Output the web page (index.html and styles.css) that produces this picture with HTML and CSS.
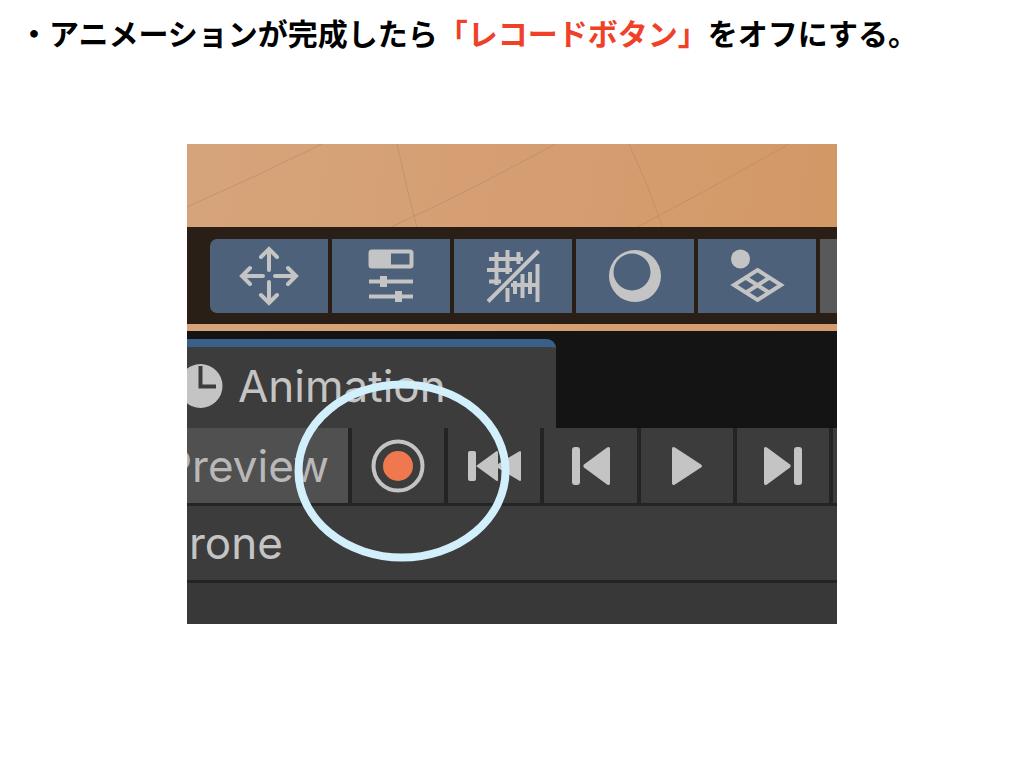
FILE: index.html
```html
<!DOCTYPE html>
<html lang="ja">
<head>
<meta charset="utf-8">
<title>レコードボタン</title>
<link rel="stylesheet" href="styles.css">
</head>
<body>
<main class="slide">
  <h1 class="title">・アニメーションが完成したら<em class="accent">「レコードボタン」</em>をオフにする。</h1>
  <section class="editor" aria-label="Animation">
    <svg class="scene" viewBox="0 0 650 83" preserveAspectRatio="none" aria-hidden="true">
      <path d="M0 63Q70 32 135 0M202 84Q285 46 368 0M449 84Q525 44 602 0M210 0Q219 42 230 84M442 0Q461 40 476 84"/>
    </svg>
    <div class="toolbar">
      <button class="tool" type="button" aria-label="Move">
        <svg class="icon" viewBox="0 0 60 60"><path class="line round" d="M30 24V4M22 11L30 3L38 11M30 36V56M22 49L30 57L38 49M24 30H4M11 22L3 30L11 38M36 30H56M49 22L57 30L49 38"/></svg>
      </button>
      <button class="tool" type="button" aria-label="Options">
        <svg class="icon" viewBox="0 0 60 60"><rect class="line" x="9.5" y="5.500" width="41" height="15" rx="1.500"/><path class="fill" d="M8 6Q8 4 10 4H30V22H10Q8 22 8 20Z"/><path class="line" d="M8 35.500H52M8 50.500H52"/><path class="fill" d="M19 30H26V41H19ZM34 45H41V56H34Z"/></svg>
      </button>
      <button class="tool" type="button" aria-label="Grid">
        <svg class="icon" viewBox="0 0 60 60"><path class="line" d="M5 55.500L55.500 5M13.500 6V39M24.500 4V28M35.500 6V18M6 13H40M4 24H29M6 35.500H18M24.500 42V56M32 35V48M39.500 28V52M47 26V48M54.500 18V56M28 39H54"/></svg>
      </button>
      <button class="tool" type="button" aria-label="Shading">
        <svg class="icon" viewBox="0 0 60 60"><path class="fill" fill-rule="evenodd" d="M30 4A26 26 0 1 1 30 56A26 26 0 1 1 30 4ZM27 7.500A18.500 18.500 0 1 0 27 44.500A18.500 18.500 0 1 0 27 7.500Z"/></svg>
      </button>
      <button class="tool" type="button" aria-label="Snap">
        <svg class="icon" viewBox="0 0 60 60"><circle class="fill" cx="13.500" cy="13" r="9.500"/><path class="line" d="M30.500 24L54 39L30.500 54L7 39ZM18.500 31.500L42 46.500M42.500 31.500L19 46.500"/></svg>
      </button>
      <span class="tool-next"></span>
    </div>
    <div class="strip"></div>
    <div class="tabs">
      <div class="tab">
        <svg class="clock" viewBox="9 0 36 44" aria-hidden="true"><circle class="fill" cx="22.500" cy="22" r="22"/><path class="hands" d="M22.500 2V22.500H38"/></svg>
        <span>Animation</span>
      </div>
    </div>
    <div class="controls">
      <button class="preview" type="button">Preview</button>
      <button class="control" type="button" aria-label="Record">
        <svg class="icon" viewBox="0 0 60 60"><circle class="line" cx="30" cy="30" r="24.500"/><circle class="record" cx="30" cy="30" r="15"/></svg>
      </button>
      <button class="control" type="button" aria-label="First frame">
        <svg class="icon" viewBox="0 0 60 60"><rect class="fill" x="4" y="15" width="8" height="30" rx="2"/><path class="fill" d="M12 30L32 15.500Q34 14 34 16.500V28L55 15.500Q57 14 57 16.500V43.500Q57 46 55 44.500L34 32V43.500Q34 46 32 44.500Z"/></svg>
      </button>
      <button class="control" type="button" aria-label="Previous frame">
        <svg class="icon" viewBox="0 0 60 60"><rect class="fill" x="11" y="11" width="8" height="38" rx="3"/><path class="fill" d="M23 28.500L46 11.500Q49 10 49 13V47Q49 50 46 48.500L23 31.500Q21.500 30 23 28.500Z"/></svg>
      </button>
      <button class="control" type="button" aria-label="Play">
        <svg class="icon" viewBox="0 0 60 60"><path class="fill" d="M15 13Q15 10 18 11.500L44 28.500Q46 30 44 31.500L18 48.500Q15 50 15 47Z"/></svg>
      </button>
      <button class="control" type="button" aria-label="Next frame">
        <svg class="icon" viewBox="0 0 60 60"><rect class="fill" x="41" y="11" width="8" height="38" rx="3"/><path class="fill" d="M37 28.500L14 11.500Q11 10 11 13V47Q11 50 14 48.500L37 31.500Q38.500 30 37 28.500Z"/></svg>
      </button>
      <span class="control-next"></span>
    </div>
    <div class="clip">rone</div>
    <div class="empty"></div>
    <svg class="marker" viewBox="0 0 216 182" aria-hidden="true"><ellipse cx="108" cy="91" rx="103.500" ry="86.500"/></svg>
  </section>
</main>
</body>
</html>
```
FILE: styles.css
```css
* {
  box-sizing: border-box;
}

body {
  margin: 0;
  background: #fff;
}

.slide {
  padding: 10px 19px;
}

.title {
  margin: 0 0 90px;
  font: bold 30px/44px "Noto Sans CJK JP", sans-serif;
  color: #000;
}

.accent {
  font-style: normal;
  color: #ee4128;
}

.editor {
  position: relative;
  max-width: 650px;
  margin: 0 auto;
  overflow: hidden;
  background: #242424;
  color: #c4c4c4;
  font: 44px/52px Inter, sans-serif;
}

button {
  margin: 0;
  padding: 0;
  border: 0;
  font: inherit;
  color: inherit;
}

.scene {
  display: block;
  width: 100%;
  height: 83px;
  background: linear-gradient(100deg, #d6a47b, #d59d70 60%, #d29866);
}

.scene path {
  fill: none;
  stroke: #b88d69;
  stroke-width: 1;
  opacity: 0.7;
}

.toolbar {
  display: flex;
  gap: 4px;
  padding: 12px 0 11px 23px;
  background: #2a1f17;
}

.tool {
  display: flex;
  flex: 0 0 118px;
  align-items: center;
  justify-content: center;
  height: 74px;
  background: #4d617a;
}

.tool:first-child {
  border-radius: 7px 0 0 7px;
}

.tool-next {
  flex: 1;
  background: #595959;
}

.icon {
  display: block;
  width: 60px;
  height: 60px;
}

.fill {
  fill: #c4c4c4;
}

.line {
  fill: none;
  stroke: #c4c4c4;
  stroke-width: 4;
}

.round {
  stroke-linecap: round;
}

.record {
  fill: #ef784e;
}

.strip {
  height: 7px;
  background: linear-gradient(90deg, #d6a47b, #d59b6c);
}

.tabs {
  padding-top: 8px;
  background: #141414;
}

.tab {
  display: flex;
  align-items: center;
  gap: 15px;
  width: 369px;
  max-width: 100%;
  height: 89px;
  padding-bottom: 4px;
  border-top: 8px solid #3a5f88;
  border-top-right-radius: 9px;
  background: #3c3c3c;
}

.clock {
  width: 36px;
  height: 44px;
}

.hands {
  fill: none;
  stroke: #3c3c3c;
  stroke-width: 4;
}

.controls {
  display: flex;
  gap: 4px;
  height: 75px;
}

.preview {
  display: flex;
  flex: 0 0 161px;
  align-items: center;
  justify-content: flex-end;
  min-width: 0;
  padding-right: 19px;
  overflow: hidden;
  background: #505050;
  color: #b8b8b8;
}

.control {
  display: flex;
  flex: 1;
  align-items: center;
  justify-content: center;
  background: #3c3c3c;
}

.control-next {
  flex: 0 0 4px;
  background: #3c3c3c;
}

.clip {
  margin: 3px 0;
  padding: 11px 2px;
  background: #3c3c3c;
}

.empty {
  height: 41px;
  background: #383838;
}

.marker {
  position: absolute;
  top: 236px;
  left: 107px;
  width: 216px;
  height: 182px;
}

.marker ellipse {
  fill: none;
  stroke: #d2effc;
  stroke-width: 8;
}
```
